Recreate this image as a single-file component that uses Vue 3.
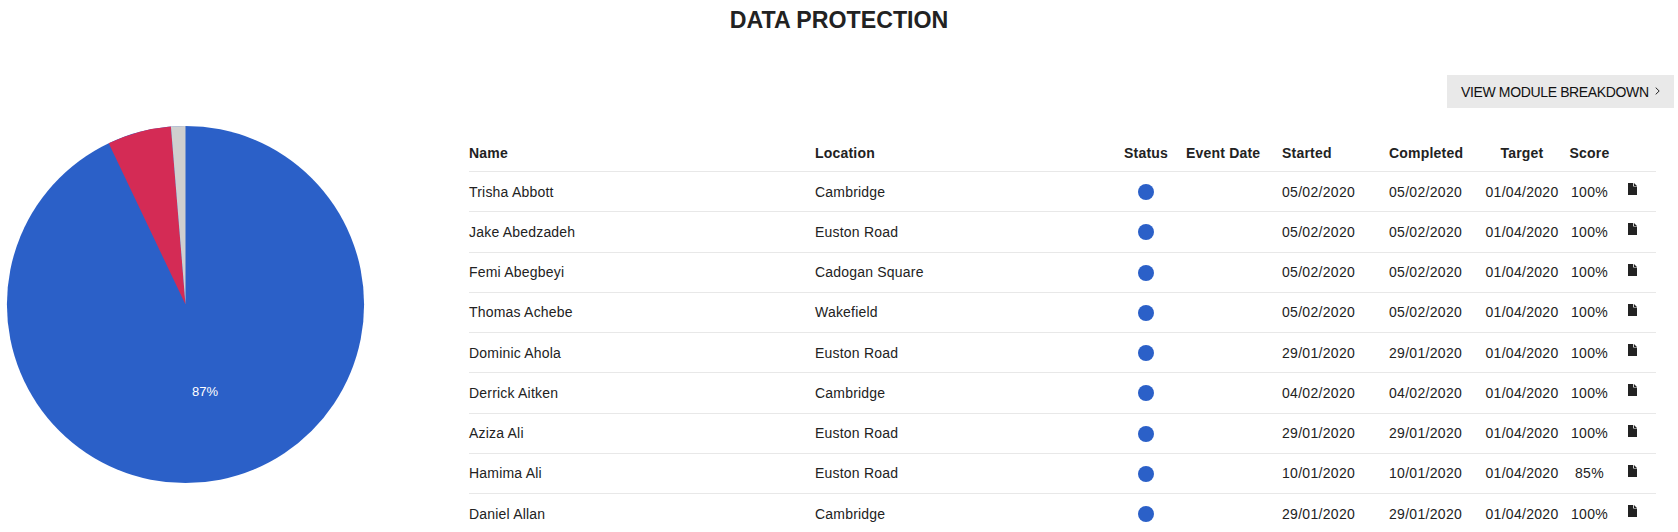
<script setup>
const rows = [
  { name: 'Trisha Abbott', location: 'Cambridge', started: '05/02/2020', completed: '05/02/2020', score: '100%' },
  { name: 'Jake Abedzadeh', location: 'Euston Road', started: '05/02/2020', completed: '05/02/2020', score: '100%' },
  { name: 'Femi Abegbeyi', location: 'Cadogan Square', started: '05/02/2020', completed: '05/02/2020', score: '100%' },
  { name: 'Thomas Achebe', location: 'Wakefield', started: '05/02/2020', completed: '05/02/2020', score: '100%' },
  { name: 'Dominic Ahola', location: 'Euston Road', started: '29/01/2020', completed: '29/01/2020', score: '100%' },
  { name: 'Derrick Aitken', location: 'Cambridge', started: '04/02/2020', completed: '04/02/2020', score: '100%' },
  { name: 'Aziza Ali', location: 'Euston Road', started: '29/01/2020', completed: '29/01/2020', score: '100%' },
  { name: 'Hamima Ali', location: 'Euston Road', started: '10/01/2020', completed: '10/01/2020', score: '85%' },
  { name: 'Daniel Allan', location: 'Cambridge', started: '29/01/2020', completed: '29/01/2020', score: '100%' }
];
</script>

<template>
  <div class="page">
    <h1 class="title">DATA PROTECTION</h1>

    <div class="content">
      <div class="chart">
        <svg width="370" height="370" viewBox="0 0 370 370">
          <circle cx="185.5" cy="185.5" r="178.6" fill="#2b60c8" />
          <path d="M185.5 185.5 L108.7 24.3 A178.6 178.6 0 0 1 170.9 7.5 Z" fill="#d42b55" />
          <path d="M185.5 185.5 L170.9 7.5 A178.6 178.6 0 0 1 185.5 6.9 Z" fill="#cfcfcf" />
          <text x="192" y="277" class="slice-label">87%</text>
        </svg>
      </div>

      <div class="main">
        <div class="actions">
          <a class="breakdown">
            <span class="breakdown-text">VIEW MODULE BREAKDOWN</span>
            <svg class="chevron" width="5" height="8" viewBox="0 0 5 8"><path d="M0.7 0.6 L4.2 4 L0.7 7.4" fill="none" stroke="#222" stroke-width="1" /></svg>
          </a>
        </div>

        <table class="results">
          <colgroup>
            <col class="col-name" />
            <col class="col-location" />
            <col class="col-status" />
            <col class="col-event" />
            <col class="col-started" />
            <col class="col-completed" />
            <col class="col-target" />
            <col class="col-score" />
            <col />
          </colgroup>
          <thead>
            <tr>
              <th>Name</th>
              <th>Location</th>
              <th class="center">Status</th>
              <th>Event Date</th>
              <th>Started</th>
              <th>Completed</th>
              <th class="center">Target</th>
              <th class="center">Score</th>
              <th></th>
            </tr>
          </thead>
          <tbody>
            <tr v-for="row in rows" :key="row.name">
              <td>{{ row.name }}</td>
              <td>{{ row.location }}</td>
              <td class="center"><span class="dot"></span></td>
              <td></td>
              <td class="num">{{ row.started }}</td>
              <td class="num">{{ row.completed }}</td>
              <td class="num center">01/04/2020</td>
              <td class="num center">{{ row.score }}</td>
              <td>
                <svg class="file" width="9" height="12" viewBox="0 0 9 12"><path d="M0 0 H5.2 V3.6 H9 V12 H0 Z M6 0 L9 2.9 H6 Z" fill="#222" /></svg>
              </td>
            </tr>
          </tbody>
        </table>
      </div>
    </div>
  </div>
</template>

<style scoped>
.page {
  height: 532px;
  overflow: hidden;
  font-family: "Liberation Sans", Arial, sans-serif;
  color: #222;
}

.title {
  margin: 0;
  padding-top: 7px;
  height: 50px;
  box-sizing: border-box;
  text-align: center;
  font-size: 23.2px;
  line-height: 26px;
  font-weight: 700;
}

.content {
  display: flex;
}

.chart {
  width: 469px;
  flex-shrink: 0;
  padding-top: 69px;
}

.chart svg {
  display: block;
}

.slice-label {
  font-family: "Liberation Sans", Arial, sans-serif;
  font-size: 13px;
  fill: #fff;
}

.main {
  flex: 1;
  min-width: 0;
  padding-right: 4px;
}

.actions {
  display: flex;
  justify-content: flex-end;
  padding-top: 25px;
}

.breakdown {
  display: flex;
  align-items: center;
  gap: 6px;
  height: 33px;
  width: 227px;
  box-sizing: border-box;
  padding-left: 14px;
  background: #e9e9e9;
  color: #111;
  font-size: 14px;
  letter-spacing: -0.36px;
}

.chevron {
  margin-top: -2px;
}

.results {
  margin-top: 25px;
  width: 1187px;
  table-layout: fixed;
  border-collapse: separate;
  border-spacing: 0;
  font-size: 14px;
  letter-spacing: 0.2px;
}

.col-name { width: 346px; }
.col-location { width: 291px; }
.col-status { width: 80px; }
.col-event { width: 96px; }
.col-started { width: 107px; }
.col-completed { width: 96px; }
.col-target { width: 74px; }
.col-score { width: 61px; }

.results th {
  height: 39px;
  padding: 2px 0 0;
  box-sizing: border-box;
  text-align: left;
  font-weight: 700;
  border-bottom: 1px solid #e8e8e8;
}

.results td {
  height: 40.28px;
  padding: 0;
  box-sizing: border-box;
  border-bottom: 1px solid #e8e8e8;
}

.results .center {
  text-align: center;
}

.results .num {
  letter-spacing: 0.3px;
}

.dot {
  display: block;
  width: 16px;
  height: 16px;
  margin: 1px auto 0;
  border-radius: 50%;
  background: #2b60c8;
}

.file {
  display: block;
  margin: 0 0 5px 8px;
}
</style>
